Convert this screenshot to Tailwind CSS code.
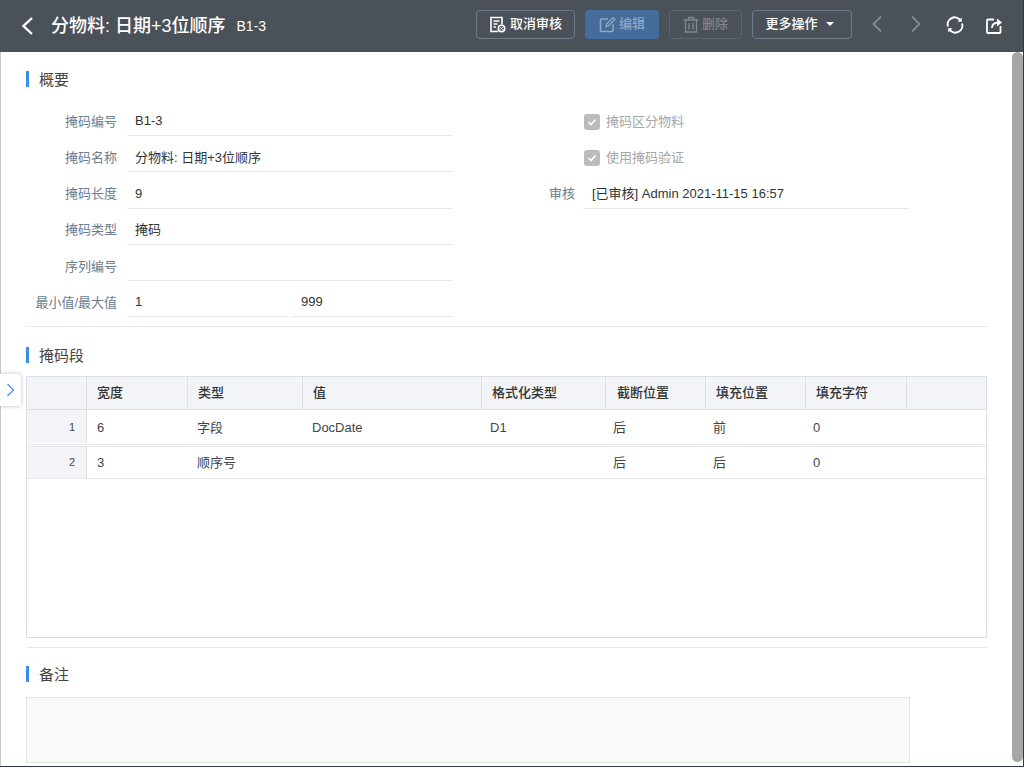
<!DOCTYPE html>
<html lang="en">
<head>
    <meta charset="UTF-8">
    <script src="https://cdn.jsdelivr.net/npm/@tailwindcss/browser@4"></script>
    <title>掩码</title>
</head>
<body class="h-screen overflow-hidden bg-white font-['Liberation_Sans','Noto_Sans_CJK_SC',sans-serif] text-[13px] text-[#333]">
    <div class="relative flex h-[767px] w-[1024px] flex-col border-r border-b border-r-[#2f3a44] border-b-[#2f3a44]">
        <!-- header -->
        <header class="flex h-[52px] flex-none items-center bg-[#4a5158] pl-[20px] text-white">
            <svg class="w-[14px] h-[20px] flex-none" viewBox="0 0 14 20" fill="none" stroke="#fff" stroke-width="2.4"><path d="M12 2 L3.5 10 L12 18"/></svg>
            <h1 class="ml-[17px] text-[18px] font-medium leading-none">分物料: 日期+3位顺序</h1>
            <span class="ml-[11px] text-[14px] font-medium">B1-3</span>
            <button class="mb-[4px] ml-[210px] flex h-[29px] w-[99px] items-center justify-center gap-[4px] rounded-[4px] border border-[#6c7c8c] font-medium">
                <svg class="w-[17px] h-[17px]" viewBox="0 0 17 17" fill="none" stroke="#fff" stroke-width="1.6"><path d="M9 15.500H2V1.500h11v7"/><path d="M4.500 5h6M4.500 8h4M4.500 11h2.500"/><circle cx="12.500" cy="12.500" r="3.200"/><path d="M11.300 11.300l2.400 2.400M13.700 11.300l-2.400 2.400" stroke-width="1"/></svg>
                取消审核
            </button>
            <button class="mb-[4px] ml-[10px] flex h-[29px] w-[74px] items-center justify-center gap-[3px] rounded-[4px] bg-[#456d9c] font-medium text-[#8fa6c0]">
                <svg class="w-[17px] h-[17px]" viewBox="0 0 17 17" fill="none" stroke="#8fa6c0" stroke-width="1.600"><path d="M9 3H2.500a1 1 0 0 0-1 1v10.500a1 1 0 0 0 1 1H13a1 1 0 0 0 1-1V8"/><path d="M7 10.500l.6-2.500L14 1.600l1.800 1.800L9.500 9.800z" stroke-width="1.300"/></svg>
                编辑
            </button>
            <button class="mb-[4px] ml-[10px] flex h-[29px] w-[73px] items-center justify-center gap-[3px] rounded-[4px] border border-[#5c656d] font-medium text-[#81878d]">
                <svg class="w-[16px] h-[17px]" viewBox="0 0 16 17" fill="none" stroke="#81878d" stroke-width="1.400"><path d="M.5 4h15M5.500 4V1.500h5V4M2.500 4v12h11V4M6 7v6.500M10 7v6.500"/></svg>
                删除
            </button>
            <button class="mb-[4px] ml-[10px] flex h-[29px] w-[100px] items-center justify-center gap-[8px] rounded-[4px] border border-[#6c7c8c] pr-[5px] font-medium">
                更多操作
                <span class="h-0 w-0 border-x-[4px] border-t-[4px] border-x-transparent border-t-white"></span>
            </button>
            <svg class="mb-[4px] ml-[19px] w-[12px] h-[18px] flex-none" viewBox="0 0 12 18" fill="none" stroke="#858b90" stroke-width="1.800"><path d="M10 1.500 L2.500 9 L10 16.500"/></svg>
            <svg class="mb-[4px] ml-[27px] w-[12px] h-[18px] flex-none" viewBox="0 0 12 18" fill="none" stroke="#858b90" stroke-width="1.800"><path d="M2 1.500 L9.500 9 L2 16.500"/></svg>
            <svg class="mb-[2px] ml-[24px] w-[18px] h-[18px] flex-none" viewBox="0 0 18 18" fill="none" stroke="#fff" stroke-width="2"><path d="M2 10.500A7 7 0 0 1 14.500 4.500"/><path d="M16 7.500A7 7 0 0 1 3.500 13.500"/><path d="M15.800 1.500v4.300h-4.300z" fill="#fff" stroke="none"/><path d="M2.200 16.500v-4.300h4.300z" fill="#fff" stroke="none"/></svg>
            <svg class="mb-[2px] ml-[22px] w-[17px] h-[17px] flex-none" viewBox="0 0 17 17" fill="none" stroke="#fff" stroke-width="1.800"><path d="M8 2.500H2a1 1 0 0 0-1 1V15a1 1 0 0 0 1 1h11.500a1 1 0 0 0 1-1V9"/><path d="M6 11c0-4 3-5.500 7-5.500"/><path d="M11 1.500l5 4-5 4z" fill="#fff" stroke="none"/></svg>
        </header>

        <div class="flex min-h-0 flex-1">
            <!-- page body -->
            <main class="w-[1011px] flex-none overflow-hidden border-l border-l-[#c8c8c8] pl-[25px]">
                <h2 class="mt-[19px] flex h-[16px] items-center border-l-[3px] border-[#3a8ee6] pl-[10px] text-[15px] leading-none text-[#444]">概要</h2>

                <div class="mt-[13px] flex w-[961px] border-b border-[#e8e8e8] pb-[9px]">
                    <div class="w-[427px] flex-none">
                        <div class="flex h-[36.200px] items-stretch">
                            <label class="flex w-[91px] flex-none items-center justify-end pt-[7px] text-[#6b7c8e]">掩码编号</label>
                            <div class="ml-[10px] flex w-[326px] items-center border-b border-[#e8e8e8] pl-[8px] pt-[7px]">B1-3</div>
                        </div>
                        <div class="flex h-[36.200px] items-stretch">
                            <label class="flex w-[91px] flex-none items-center justify-end pt-[7px] text-[#6b7c8e]">掩码名称</label>
                            <div class="ml-[10px] flex w-[326px] items-center border-b border-[#e8e8e8] pl-[8px] pt-[7px]">分物料: 日期+3位顺序</div>
                        </div>
                        <div class="flex h-[36.200px] items-stretch">
                            <label class="flex w-[91px] flex-none items-center justify-end pt-[7px] text-[#6b7c8e]">掩码长度</label>
                            <div class="ml-[10px] flex w-[326px] items-center border-b border-[#e8e8e8] pl-[8px] pt-[7px]">9</div>
                        </div>
                        <div class="flex h-[36.200px] items-stretch">
                            <label class="flex w-[91px] flex-none items-center justify-end pt-[7px] text-[#6b7c8e]">掩码类型</label>
                            <div class="ml-[10px] flex w-[326px] items-center border-b border-[#e8e8e8] pl-[8px] pt-[7px]">掩码</div>
                        </div>
                        <div class="flex h-[36.200px] items-stretch">
                            <label class="flex w-[91px] flex-none items-center justify-end pt-[7px] text-[#6b7c8e]">序列编号</label>
                            <div class="ml-[10px] w-[326px] border-b border-[#e8e8e8]"></div>
                        </div>
                        <div class="flex h-[36.200px] items-stretch">
                            <label class="flex w-[91px] flex-none items-center justify-end pt-[7px] text-[#6b7c8e]">最小值/最大值</label>
                            <div class="ml-[10px] flex w-[160px] items-center border-b border-[#e8e8e8] pl-[8px] pt-[7px]">1</div>
                            <div class="ml-[5px] flex w-[161px] items-center border-b border-[#e8e8e8] pl-[9px] pt-[7px]">999</div>
                        </div>
                    </div>
                    <div class="ml-[105px] w-[352px] flex-none">
                        <div class="flex h-[36.200px] items-center gap-[6px] pl-[26px] pt-[7px] text-[#a6a6a6]">
                            <span class="flex size-[16px] items-center justify-center rounded-[3px] bg-[#bcbcbc]">
                                <svg class="size-[10px]" viewBox="0 0 10 10" fill="none" stroke="#fff" stroke-width="1.600"><path d="M1.500 5l2.500 2.500 4.500-5"/></svg>
                            </span>
                            掩码区分物料
                        </div>
                        <div class="flex h-[36.200px] items-center gap-[6px] pl-[26px] pt-[7px] text-[#a6a6a6]">
                            <span class="flex size-[16px] items-center justify-center rounded-[3px] bg-[#bcbcbc]">
                                <svg class="size-[10px]" viewBox="0 0 10 10" fill="none" stroke="#fff" stroke-width="1.600"><path d="M1.500 5l2.500 2.500 4.500-5"/></svg>
                            </span>
                            使用掩码验证
                        </div>
                        <div class="flex h-[36.200px] items-stretch">
                            <label class="flex w-[17px] flex-none items-center justify-end whitespace-nowrap pt-[7px] text-[#6b7c8e]">审核</label>
                            <div class="ml-[8px] flex w-[327px] items-center border-b border-[#e8e8e8] pl-[9px] pt-[7px]">[已审核] Admin 2021-11-15 16:57</div>
                        </div>
                    </div>
                </div>

                <h2 class="mt-[20px] flex h-[16px] items-center border-l-[3px] border-[#3a8ee6] pl-[10px] text-[15px] leading-none text-[#444]">掩码段</h2>

                <!-- table -->
                <div class="mt-[13px] h-[262px] w-[961px] border border-[#dcdfe6]">
                    <div class="grid h-[33px] grid-cols-[60px_101px_115px_179px_124px_100px_100px_101px_1fr] border-b border-[#dcdfe6] bg-[#f2f4f8] font-medium text-[#333]">
                        <div class="border-r border-[#dcdfe6]"></div>
                        <div class="flex items-center border-r border-[#dcdfe6] pl-[10px]">宽度</div>
                        <div class="flex items-center border-r border-[#dcdfe6] pl-[10px]">类型</div>
                        <div class="flex items-center border-r border-[#dcdfe6] pl-[10px]">值</div>
                        <div class="flex items-center border-r border-[#dcdfe6] pl-[10px]">格式化类型</div>
                        <div class="flex items-center border-r border-[#dcdfe6] pl-[11px]">截断位置</div>
                        <div class="flex items-center border-r border-[#dcdfe6] pl-[10px]">填充位置</div>
                        <div class="flex items-center border-r border-[#dcdfe6] pl-[10px]">填充字符</div>
                        <div></div>
                    </div>
                    <div class="grid h-[35px] grid-cols-[60px_101px_115px_179px_124px_100px_100px_101px_1fr] border-b border-[#e6e8ec] text-[#444]">
                        <div class="mb-px flex items-center justify-end border-r border-[#dcdfe6] bg-[#f2f4f8] pr-[11px] pt-[2px] text-[11px]">1</div>
                        <div class="flex items-center pl-[10px] pt-[2px]">6</div>
                        <div class="flex items-center pl-[9px] pt-[2px]">字段</div>
                        <div class="flex items-center pl-[9px] pt-[2px]">DocDate</div>
                        <div class="flex items-center pl-[8px] pt-[2px]">D1</div>
                        <div class="flex items-center pl-[7px] pt-[2px]">后</div>
                        <div class="flex items-center pl-[7px] pt-[2px]">前</div>
                        <div class="flex items-center pl-[7px] pt-[2px]">0</div>
                        <div></div>
                    </div>
                    <div class="mt-px grid h-[33px] grid-cols-[60px_101px_115px_179px_124px_100px_100px_101px_1fr] border-y border-[#e6e8ec] text-[#444]">
                        <div class="flex items-center justify-end border-r border-[#dcdfe6] bg-[#f2f4f8] pr-[11px] text-[11px]">2</div>
                        <div class="flex items-center pl-[10px]">3</div>
                        <div class="flex items-center pl-[9px]">顺序号</div>
                        <div class="flex items-center pl-[9px]"></div>
                        <div class="flex items-center pl-[8px]"></div>
                        <div class="flex items-center pl-[7px]">后</div>
                        <div class="flex items-center pl-[7px]">后</div>
                        <div class="flex items-center pl-[7px]">0</div>
                        <div></div>
                    </div>
                </div>

                <div class="mt-[9px] w-[961px] border-t border-[#e8e8e8]"></div>

                <h2 class="mt-[18px] flex h-[16px] items-center border-l-[3px] border-[#3a8ee6] pl-[10px] text-[15px] leading-none text-[#444]">备注</h2>
                <div class="mt-[15px] h-[66px] w-[884px] border border-[#e4e4e4] bg-[#fafafa]"></div>
            </main>

            <!-- scrollbar -->
            <div class="ml-px w-[11px] flex-none pb-[4px]">
                <div class="h-full rounded-[6px] bg-[#a6a6a6]"></div>
            </div>
        </div>

        <!-- side tab -->
        <div class="absolute left-0 top-[374px] flex h-[32px] w-[21px] items-center justify-center rounded-r-[3px] bg-white shadow-[0_0_4px_rgba(0,0,0,0.25)]">
            <svg class="w-[9px] h-[14px]" viewBox="0 0 9 14" fill="none" stroke="#4a90e2" stroke-width="1.200"><path d="M1.500 1 L7.500 7 L1.500 13"/></svg>
        </div>
    </div>
</body>
</html>
